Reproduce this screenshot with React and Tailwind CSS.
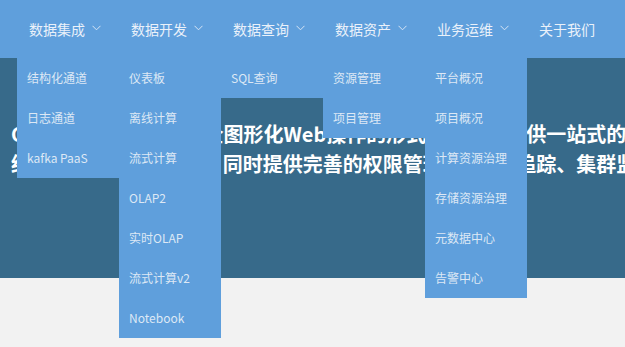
import React from "react";

const menus = [
  { label: "数据集成", items: ["结构化通道", "日志通道", "kafka PaaS"] },
  { label: "数据开发", items: ["仪表板", "离线计算", "流式计算", "OLAP2", "实时OLAP", "流式计算v2", "Notebook"] },
  { label: "数据查询", items: ["SQL查询"] },
  { label: "数据资产", items: ["资源管理", "项目管理"] },
  { label: "业务运维", items: ["平台概况", "项目概况", "计算资源治理", "存储资源治理", "元数据中心", "告警中心"] },
  { label: "关于我们", items: null },
];

function Chevron() {
  return (
    <svg width="9" height="6" viewBox="0 0 9 6" className="ml-[7px] mt-[-2px]" fill="none">
      <path d="M0.5 0.8 L4.5 4.8 L8.5 0.8" stroke="#d6e4f4" strokeWidth="1" />
    </svg>
  );
}

export default function App() {
  return (
    <div
      className="w-[625px] h-[347px] overflow-hidden bg-[#f2f2f2] relative"
      style={{ fontFamily: '"Noto Sans CJK SC", "Noto Sans", sans-serif' }}
    >
      <nav className="h-[58px] bg-[#5f9fdc] flex pl-[17px] relative z-10">
        {menus.map((m) => (
          <div key={m.label} className="relative w-[102px] shrink-0 h-full">
            <div className="h-full flex items-center pl-[12px] text-[14px] text-[#eaf1fa] leading-none">
              <span>{m.label}</span>
              {m.items && <Chevron />}
            </div>
            {m.items && (
              <ul className="absolute left-0 top-full w-[102px] bg-[#5f9fdc]">
                {m.items.map((it) => (
                  <li
                    key={it}
                    className="h-[40px] flex items-center pl-[10px] text-[12px] text-[#dde8f5] whitespace-nowrap"
                  >
                    {it}
                  </li>
                ))}
              </ul>
            )}
          </div>
        ))}
      </nav>
      <section className="h-[220px] bg-[#376a8a] pt-[61px] pl-[11px]">
        <p className="text-[20px] font-bold text-white leading-[30px] whitespace-nowrap">
          CDP2数据中台是一个全图形化Web操作的形式来进行，提供一站式的数据服务
        </p>
        <p className="text-[20px] font-bold text-white leading-[30px] whitespace-nowrap">
          经过5年的打磨与沉淀，同时提供完善的权限管理、Flink 追踪、集群监控
        </p>
      </section>
    </div>
  );
}
